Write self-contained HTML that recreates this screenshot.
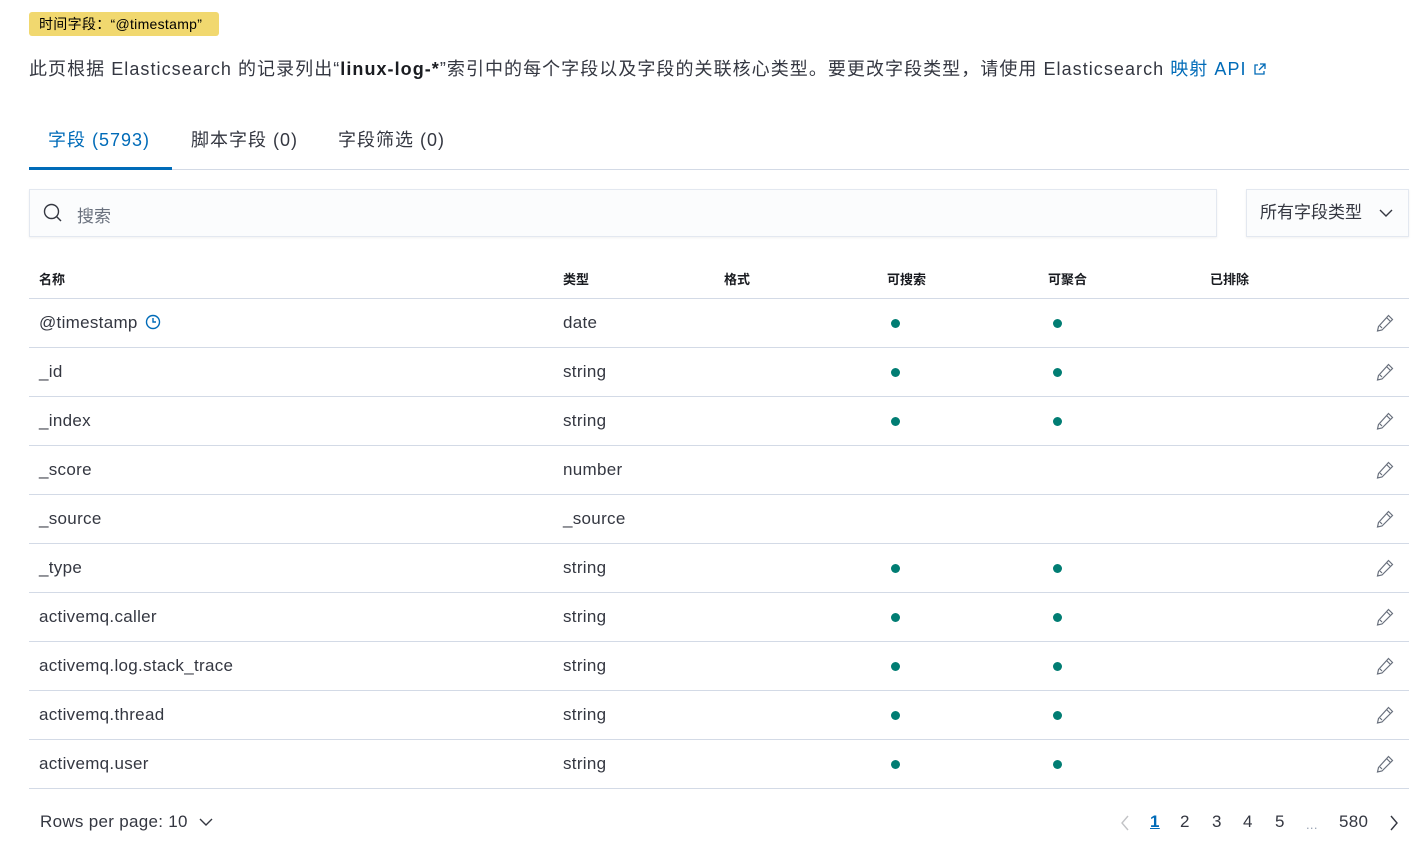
<!DOCTYPE html>
<html><head><meta charset="utf-8"><style>
*{box-sizing:border-box;margin:0;padding:0}
body{width:1428px;height:846px;background:#fff;font-family:"Liberation Sans","Noto Sans CJK SC",sans-serif;color:#343741;position:relative;overflow:hidden}
.badge{position:absolute;left:29px;top:12px;height:24px;width:190px;background:#f1d86f;border-radius:3px;font-size:14px;line-height:24px;padding-left:10px;color:#000;letter-spacing:0.3px;white-space:nowrap}
.desc{position:absolute;left:29px;top:56px;font-size:18px;line-height:26px;color:#343741;white-space:nowrap;letter-spacing:1.05px}
.desc b{color:#1a1c21}
.desc a{color:#006bb8;text-decoration:none}
.tabs{position:absolute;left:29px;top:120px;width:1380px;height:50px;border-bottom:1px solid #d3dae6}
.tab{position:absolute;top:0;height:50px;font-size:18px;line-height:40px;letter-spacing:1px}
.tab.a{color:#006bb8;border-bottom:3px solid #006bb8;height:50px}
.search{position:absolute;left:29px;top:189px;width:1188px;height:48px;background:#fbfcfd;border:1px solid #e3e8f0;box-shadow:0 1px 2px rgba(0,0,0,.06)}
.search span{position:absolute;left:47px;top:12px;font-size:17px;color:#69707d}
.sel{position:absolute;left:1246px;top:189px;width:163px;height:48px;background:#fbfcfd;border:1px solid #e3e8f0;box-shadow:0 1px 2px rgba(0,0,0,.06);font-size:17px;line-height:46px;padding-left:13px;color:#343741}
.hd{position:absolute;top:269px;font-size:13px;font-weight:bold;color:#1a1c21}
.line{position:absolute;left:29px;width:1380px;height:1px;background:#d3dae6}
.row{position:absolute;left:29px;width:1380px;height:49px;font-size:17px;letter-spacing:0.3px}
.row span{position:absolute;top:14px}
.dot{position:absolute;top:20px;width:9px;height:9px;border-radius:50%;background:#017d73}
.pen{position:absolute;left:1347px;top:15px}
.foot{position:absolute;top:812px;font-size:17px;letter-spacing:0.3px}
</style></head><body>
<div class="badge">时间字段：“@timestamp”</div>
<div class="desc">此页根据 Elasticsearch 的记录列出“<b>linux-log-*</b>”索引中的每个字段以及字段的关联核心类型。要更改字段类型，请使用 Elasticsearch <a>映射 API <svg width="13" height="13" viewBox="0 0 13 13" style="vertical-align:-1px"><path d="M5 2H2v9h9V8M7 1h5v5M12 1L6 7" fill="none" stroke="#006bb8" stroke-width="1.3"/></svg></a></div>
<div class="tabs">
<div class="tab a" style="left:0;width:143px;padding-left:19px">字段 (5793)</div>
<div class="tab" style="left:162px">脚本字段 (0)</div>
<div class="tab" style="left:309px">字段筛选 (0)</div>
</div>
<div class="search"><svg style="position:absolute;left:13px;top:13px" width="20" height="20" viewBox="0 0 20 20"><circle cx="8.5" cy="8.5" r="7" fill="none" stroke="#343741" stroke-width="1.4"/><path d="M13.5 13.5L18 18" stroke="#343741" stroke-width="1.4"/></svg><span>搜索</span></div>
<div class="sel">所有字段类型<svg style="position:absolute;left:132px;top:18px" width="14" height="10" viewBox="0 0 14 10"><path d="M1 2l6 6 6-6" fill="none" stroke="#343741" stroke-width="1.4"/></svg></div>
<div class="hd" style="left:39px">名称</div>
<div class="hd" style="left:563px">类型</div>
<div class="hd" style="left:724px">格式</div>
<div class="hd" style="left:887px">可搜索</div>
<div class="hd" style="left:1048px">可聚合</div>
<div class="hd" style="left:1210px">已排除</div>
<div class="line" style="top:298px"></div>
<div id="rows"></div>
<script>
var d=[["@timestamp","date",1],["_id","string",1],["_index","string",1],["_score","number",0],["_source","_source",0],["_type","string",1],["activemq.caller","string",1],["activemq.log.stack_trace","string",1],["activemq.thread","string",1],["activemq.user","string",1]];
var h="";d.forEach(function(r,i){var t=299+i*49;
h+='<div class="row" style="top:'+t+'px"><span style="left:10px">'+r[0]+(i==0?' <svg width="16" height="16" viewBox="0 0 16 16" style="vertical-align:-2px;margin-left:2px"><circle cx="8" cy="8" r="6.5" fill="none" stroke="#006bb8" stroke-width="1.4"/><path d="M8 4v4h3" fill="none" stroke="#006bb8" stroke-width="1.4"/></svg>':'')+'</span><span style="left:534px">'+r[1]+'</span>'+(r[2]?'<div class="dot" style="left:862px"></div><div class="dot" style="left:1024px"></div>':'')+'<svg class="pen" width="18" height="18" viewBox="0 0 18 18"><path d="M12.5 1.5l4 4L6 16l-4.5 1 1-4.5z M10.5 3.5l4 4 M4 12l2 2" fill="none" stroke="#69707d" stroke-width="1.2"/></svg></div><div class="line" style="top:'+(t+48)+'px"></div>';});
document.getElementById("rows").innerHTML=h;
</script>
<div class="foot" style="left:40px">Rows per page: 10 <svg width="14" height="10" viewBox="0 0 14 10" style="margin-left:6px"><path d="M1 2l6 6 6-6" fill="none" stroke="#343741" stroke-width="1.4"/></svg></div>
<svg style="position:absolute;left:1120px;top:815px" width="10" height="16" viewBox="0 0 10 16"><path d="M8 1L2 8l6 7" fill="none" stroke="#c2c3c6" stroke-width="1.4"/></svg>
<div class="foot" style="left:1150px;color:#006bb8;font-weight:bold;text-decoration:underline">1</div>
<div class="foot" style="left:1180px">2</div>
<div class="foot" style="left:1212px">3</div>
<div class="foot" style="left:1243px">4</div>
<div class="foot" style="left:1275px">5</div>
<div class="foot" style="left:1306px;color:#98a2b3;font-size:13px;top:817px">...</div>
<div class="foot" style="left:1339px">580</div>
<svg style="position:absolute;left:1389px;top:815px" width="10" height="16" viewBox="0 0 10 16"><path d="M2 1l6 7-6 7" fill="none" stroke="#343741" stroke-width="1.4"/></svg>
</body></html>
